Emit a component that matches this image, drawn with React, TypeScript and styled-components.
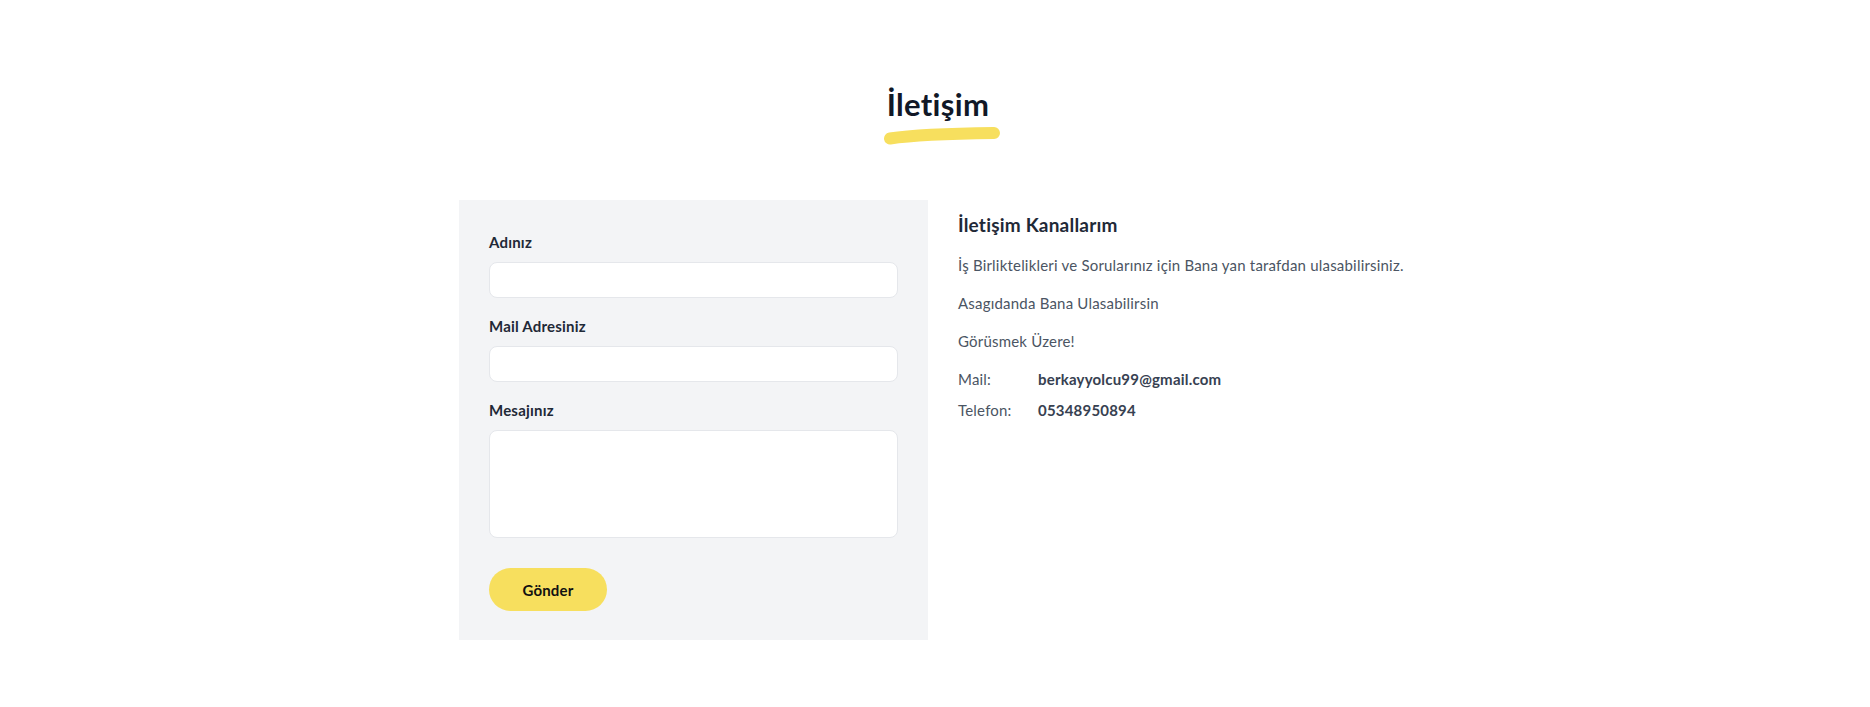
import React from "react";
import styled, { createGlobalStyle } from "styled-components";

const Global = createGlobalStyle`
  html, body { margin: 0; padding: 0; background: #ffffff; }
  body { font-family: Lato, "Noto Sans", sans-serif; color: #1f2937; letter-spacing: 0.2px; }
  * { box-sizing: border-box; }
`;

const Page = styled.section`
  width: 100%;
  padding-top: 84px;
  padding-bottom: 66px;
`;

const TitleBlock = styled.div`
  display: flex;
  flex-direction: column;
  align-items: center;
`;

const Title = styled.h2`
  margin: 0 0 0 6px;
  font-size: 31px;
  line-height: 40px;
  font-weight: 700;
  letter-spacing: 0.3px;
  color: #111827;
`;

const Underline = styled.svg`
  display: block;
  margin-top: 3px;
  margin-left: 14px;
`;

const Grid = styled.div`
  width: 952px;
  margin: 55px auto 0;
  display: grid;
  grid-template-columns: 469px 1fr;
`;

const FormPanel = styled.form`
  background: #f3f4f6;
  padding: 32px 30px 29px;
  display: flex;
  flex-direction: column;
`;

const Field = styled.div`
  display: flex;
  flex-direction: column;
  margin-bottom: 18px;
`;

const Label = styled.label`
  font-size: 15px;
  line-height: 20px;
  font-weight: 700;
  color: #1f2937;
  margin-bottom: 10px;
`;

const Input = styled.input`
  height: 36px;
  width: 100%;
  border: 1px solid #e5e7eb;
  border-radius: 8px;
  background: #ffffff;
  padding: 0 12px;
  font: inherit;
  outline: none;
`;

const TextArea = styled.textarea`
  height: 108px;
  width: 100%;
  border: 1px solid #e5e7eb;
  border-radius: 8px;
  background: #ffffff;
  padding: 8px 12px;
  font: inherit;
  resize: none;
  outline: none;
`;

const SubmitButton = styled.button`
  margin-top: 12px;
  align-self: flex-start;
  width: 118px;
  height: 43px;
  border: none;
  border-radius: 999px;
  background: #f7df5e;
  color: #111111;
  font-family: inherit;
  letter-spacing: 0.2px;
  font-size: 15px;
  font-weight: 700;
  cursor: pointer;
`;

const Info = styled.div`
  padding: 11px 0 0 30px;
`;

const InfoTitle = styled.h3`
  margin: 0 0 14px;
  font-size: 19px;
  line-height: 28px;
  font-weight: 700;
  color: #1f2937;
`;

const Paragraph = styled.p`
  margin: 0 0 14px;
  font-size: 15px;
  line-height: 24px;
  color: #4b5563;
`;

const ContactList = styled.div`
  margin-top: 2px;
  display: flex;
  flex-direction: column;
  gap: 7px;
`;

const ContactRow = styled.div`
  display: grid;
  grid-template-columns: 80px 1fr;
  font-size: 15px;
  line-height: 24px;
`;

const ContactKey = styled.span`
  color: #4b5563;
`;

const ContactValue = styled.span`
  color: #374151;
  font-weight: 700;
`;

export default function App() {
  return (
    <>
      <Global />
      <Page>
        <TitleBlock>
          <Title>İletişim</Title>
          <Underline width="118" height="18" viewBox="0 0 118 18">
            <path
              d="M7 11.5 C 30 8, 70 6.5, 111 6"
              stroke="#f7df5e"
              strokeWidth="12"
              strokeLinecap="round"
              fill="none"
            />
          </Underline>
        </TitleBlock>
        <Grid>
          <FormPanel onSubmit={(e) => e.preventDefault()}>
            <Field>
              <Label>Adınız</Label>
              <Input type="text" />
            </Field>
            <Field>
              <Label>Mail Adresiniz</Label>
              <Input type="email" />
            </Field>
            <Field>
              <Label>Mesajınız</Label>
              <TextArea />
            </Field>
            <SubmitButton type="submit">Gönder</SubmitButton>
          </FormPanel>
          <Info>
            <InfoTitle>İletişim Kanallarım</InfoTitle>
            <Paragraph>İş Birliktelikleri ve Sorularınız için Bana yan tarafdan ulasabilirsiniz.</Paragraph>
            <Paragraph>Asagıdanda Bana Ulasabilirsin</Paragraph>
            <Paragraph>Görüsmek Üzere!</Paragraph>
            <ContactList>
              <ContactRow>
                <ContactKey>Mail:</ContactKey>
                <ContactValue>berkayyolcu99@gmail.com</ContactValue>
              </ContactRow>
              <ContactRow>
                <ContactKey>Telefon:</ContactKey>
                <ContactValue>05348950894</ContactValue>
              </ContactRow>
            </ContactList>
          </Info>
        </Grid>
      </Page>
    </>
  );
}
